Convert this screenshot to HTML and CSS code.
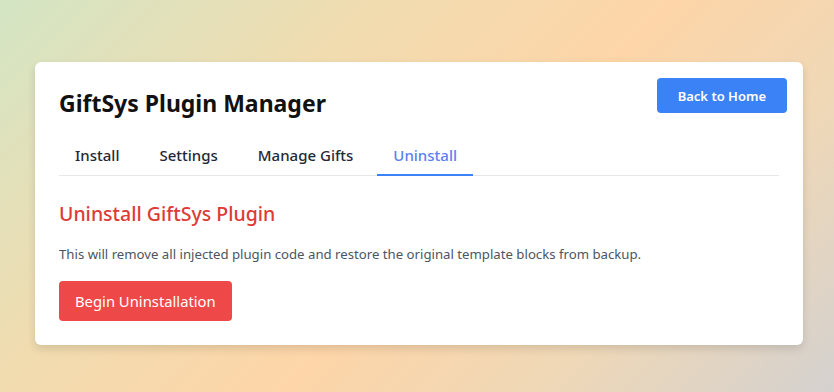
FILE: index.html
```html
<!DOCTYPE html>
<html lang="en">
<head>
<meta charset="utf-8">
<title>GiftSys Plugin Manager</title>
<link rel="stylesheet" href="styles.css">
</head>
<body>
<div class="card">
  <div class="header">
    <h1 class="title">GiftSys Plugin Manager</h1>
    <button class="btn-home">Back to Home</button>
  </div>
  <nav class="tabs">
    <div class="tab">Install</div>
    <div class="tab">Settings</div>
    <div class="tab">Manage Gifts</div>
    <div class="tab active">Uninstall</div>
  </nav>
  <section class="panel">
    <h2 class="panel-title">Uninstall GiftSys Plugin</h2>
    <p class="panel-text">This will remove all injected plugin code and restore the original template blocks from backup.</p>
    <button class="btn-danger">Begin Uninstallation</button>
  </section>
</div>
</body>
</html>
```
FILE: styles.css
```css
* { box-sizing: border-box; }
html, body { height: 100%; }
body {
  margin: 0;
  padding: 62px 31px 0 35px;
  font-family: "Noto Sans", "Open Sans", sans-serif;
  background: linear-gradient(135deg, #d3e5c4 0%, #f0dcb0 30%, #fdd5a8 55%, #f0d8b6 75%, #d4d1cf 100%);
  background-attachment: fixed;
}
.card {
  width: 768px;
  background: #fff;
  border-radius: 6px;
  padding: 24px;
  box-shadow: 0 4px 8px rgba(0,0,0,0.12);
}
.header {
  display: flex;
  justify-content: space-between;
  align-items: flex-start;
}
.title {
  margin: 0;
  font-size: 23px;
  line-height: 34px;
  font-weight: 700;
  color: #111;
}
.btn-home {
  margin: -8px -8px 0 0;
  height: 35px;
  padding: 0 21px;
  border: none;
  border-radius: 4px;
  background: #3b82f6;
  color: #fff;
  font-family: inherit;
  font-size: 13px;
  font-weight: 600;
}
.tabs {
  display: flex;
  margin-top: 18px;
  border-bottom: 1px solid #e5e7eb;
}
.tab {
  padding: 6px 16px 8px;
  font-size: 15px;
  line-height: 22px;
  color: #1f2937;
  font-weight: 500;
  border-bottom: 2px solid transparent;
  margin-bottom: -1px;
  margin-right: 8px;
}
.tab.active {
  color: #5b80f2;
  border-bottom-color: #3b82f6;
}
.panel { padding-top: 24px; }
.panel-title {
  margin: 0;
  font-size: 19.5px;
  line-height: 28px;
  font-weight: 500;
  color: #dc3b36;
}
.panel-text {
  margin: 16px 0 17px;
  font-size: 13.2px;
  line-height: 20px;
  color: #4b5563;
}
.btn-danger {
  height: 40px;
  padding: 0 16px;
  border: none;
  border-radius: 4px;
  background: #ef4848;
  color: #fff;
  font-family: inherit;
  font-size: 14.8px;
}
```
